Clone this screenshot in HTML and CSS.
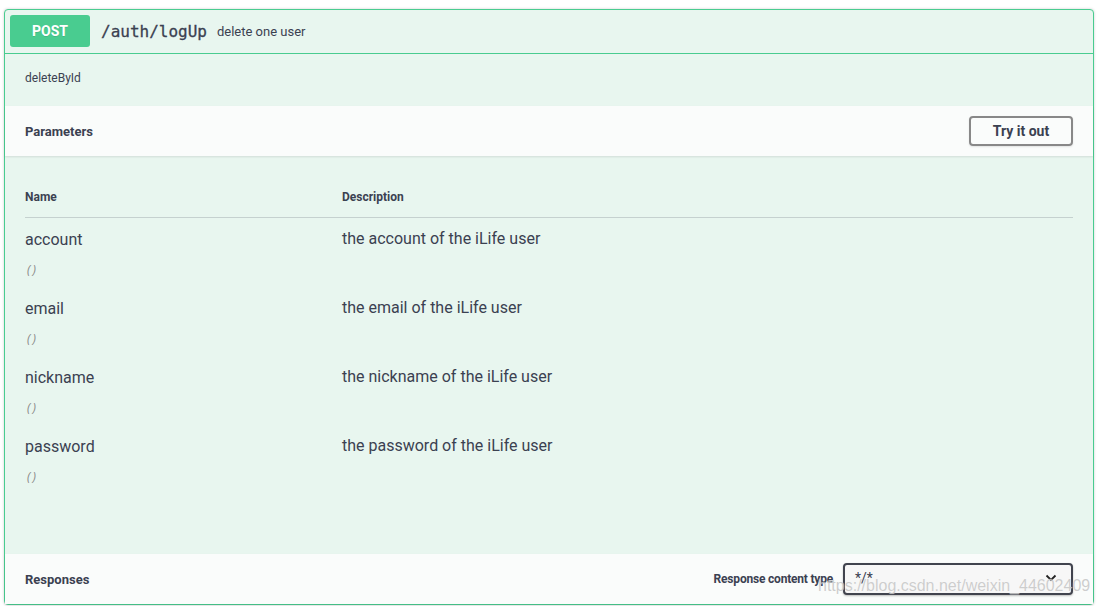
FILE: index.html
```html
<!DOCTYPE html>
<html>
<head>
<meta charset="utf-8">
<link rel="stylesheet" href="styles.css">
</head>
<body>
<div class="opblock">
  <div class="summary">
    <span class="method">POST</span>
    <span class="path">/auth/logUp</span>
    <span class="summary-desc">delete one user</span>
  </div>
  <div class="op-desc">deleteById</div>
  <div class="section-header">
    <h4 class="section-title">Parameters</h4>
    <button class="try-btn">Try it out</button>
  </div>
  <div class="params">
    <div class="params-head">
      <div class="col-name">Name</div>
      <div class="col-desc">Description</div>
    </div>
    <div class="param-row">
      <div class="col-name"><div class="p-name">account</div><div class="p-type">()</div></div>
      <div class="col-desc p-desc">the account of the iLife user</div>
    </div>
    <div class="param-row">
      <div class="col-name"><div class="p-name">email</div><div class="p-type">()</div></div>
      <div class="col-desc p-desc">the email of the iLife user</div>
    </div>
    <div class="param-row">
      <div class="col-name"><div class="p-name">nickname</div><div class="p-type">()</div></div>
      <div class="col-desc p-desc">the nickname of the iLife user</div>
    </div>
    <div class="param-row">
      <div class="col-name"><div class="p-name">password</div><div class="p-type">()</div></div>
      <div class="col-desc p-desc">the password of the iLife user</div>
    </div>
  </div>
  <div class="section-header">
    <h4 class="section-title">Responses</h4>
    <div class="content-type">
      <span class="ct-label">Response content type</span>
      <div class="select">
        <span>*/*</span>
        <svg width="12" height="8" viewBox="0 0 12 8"><path d="M1.5 1.5 L6 6 L10.5 1.5" fill="none" stroke="#222" stroke-width="1.8"/></svg>
      </div>
    </div>
  </div>
</div>
<div class="watermark">https://blog.csdn.net/weixin_44602409</div>
</body>
</html>
```
FILE: styles.css
```css
html, body {
  margin: 0;
  padding: 0;
  background: #fff;
}
body {
  font-family: Roboto, "Open Sans", sans-serif;
  color: #3b4151;
  position: relative;
  height: 606px;
  overflow: hidden;
}
.opblock {
  margin: 9px 5px 0 4px;
  border: 1px solid #49cc90;
  border-radius: 4px;
  background: #e8f6ef;
  box-shadow: 0 0 3px rgba(0,0,0,.19);
}
.summary {
  display: flex;
  align-items: center;
  padding: 5px 5px 6px;
  border-bottom: 1px solid #49cc90;
}
.method {
  width: 80px;
  height: 32px;
  box-sizing: border-box;
  display: flex;
  align-items: center;
  justify-content: center;
  background: #49cc90;
  color: #fff;
  border-radius: 3px;
  font-weight: 700;
  font-size: 14px;
  text-shadow: 0 1px 0 rgba(0,0,0,.1);
}
.path {
  margin-left: 11px;
  font-family: "DejaVu Sans Mono", monospace;
  font-size: 16px;
  color: #3b4151;
  -webkit-text-stroke: 0.3px #3b4151;
}
.summary-desc {
  margin-left: 10px;
  font-size: 13px;
}
.op-desc {
  padding: 17px 20px 0;
  height: 52px;
  box-sizing: border-box;
  line-height: 14px;
  font-size: 12px;
}
.section-header {
  height: 50px;
  box-sizing: border-box;
  padding: 0 20px;
  display: flex;
  align-items: center;
  justify-content: space-between;
  background: #fafcfb;
  box-shadow: 0 1px 2px rgba(0,0,0,.1);
}
.section-title {
  margin: 0;
  font-size: 13px;
  font-weight: 700;
}
.try-btn {
  width: 104px;
  height: 30px;
  background: transparent;
  border: 2px solid #888;
  border-radius: 4px;
  font-family: inherit;
  font-weight: 700;
  font-size: 14px;
  color: #3b4151;
  box-shadow: 0 1px 2px rgba(0,0,0,.1);
}
.params {
  padding: 21px 20px 60px;
}
.params-head {
  display: flex;
  padding: 12px 0;
  line-height: 16px;
  font-size: 12px;
  font-weight: 700;
  border-bottom: 1px solid rgba(59,65,81,.2);
}
.col-name {
  width: 317px;
  flex: none;
}
.col-desc {
  flex: 1;
}
.param-row {
  display: flex;
  padding: 12px 0 10px;
}
.p-name {
  font-size: 16px;
  line-height: 20px;
}
.p-type {
  margin-top: 13px;
  font-family: "Open Sans", sans-serif;
  font-size: 12px;
  line-height: 14px;
  font-style: italic;
  color: #888;
  padding-left: 2px;
  letter-spacing: 2px;
}
.p-desc {
  font-size: 16px;
  line-height: 20px;
  margin-top: -1px;
}
.content-type {
  display: flex;
  align-items: center;
}
.ct-label {
  font-size: 12px;
  font-weight: 700;
  letter-spacing: -0.2px;
  margin-right: 10px;
}
.select {
  width: 230px;
  height: 32px;
  box-sizing: border-box;
  border: 2px solid #41444e;
  border-radius: 4px;
  background: #f7f7f7;
  display: flex;
  align-items: center;
  justify-content: space-between;
  padding: 0 14px 2px 10px;
  font-size: 14px;
  color: #3b4151;
  box-shadow: 0 1px 2px rgba(0,0,0,.25);
}
.watermark {
  position: absolute;
  left: 818px;
  top: 577px;
  font-family: "Liberation Sans", Arial, sans-serif;
  font-size: 16px;
  color: rgba(190,190,190,.75);
  text-shadow: 0 0 1px rgba(255,255,255,.6);
  white-space: nowrap;
  pointer-events: none;
}
```
